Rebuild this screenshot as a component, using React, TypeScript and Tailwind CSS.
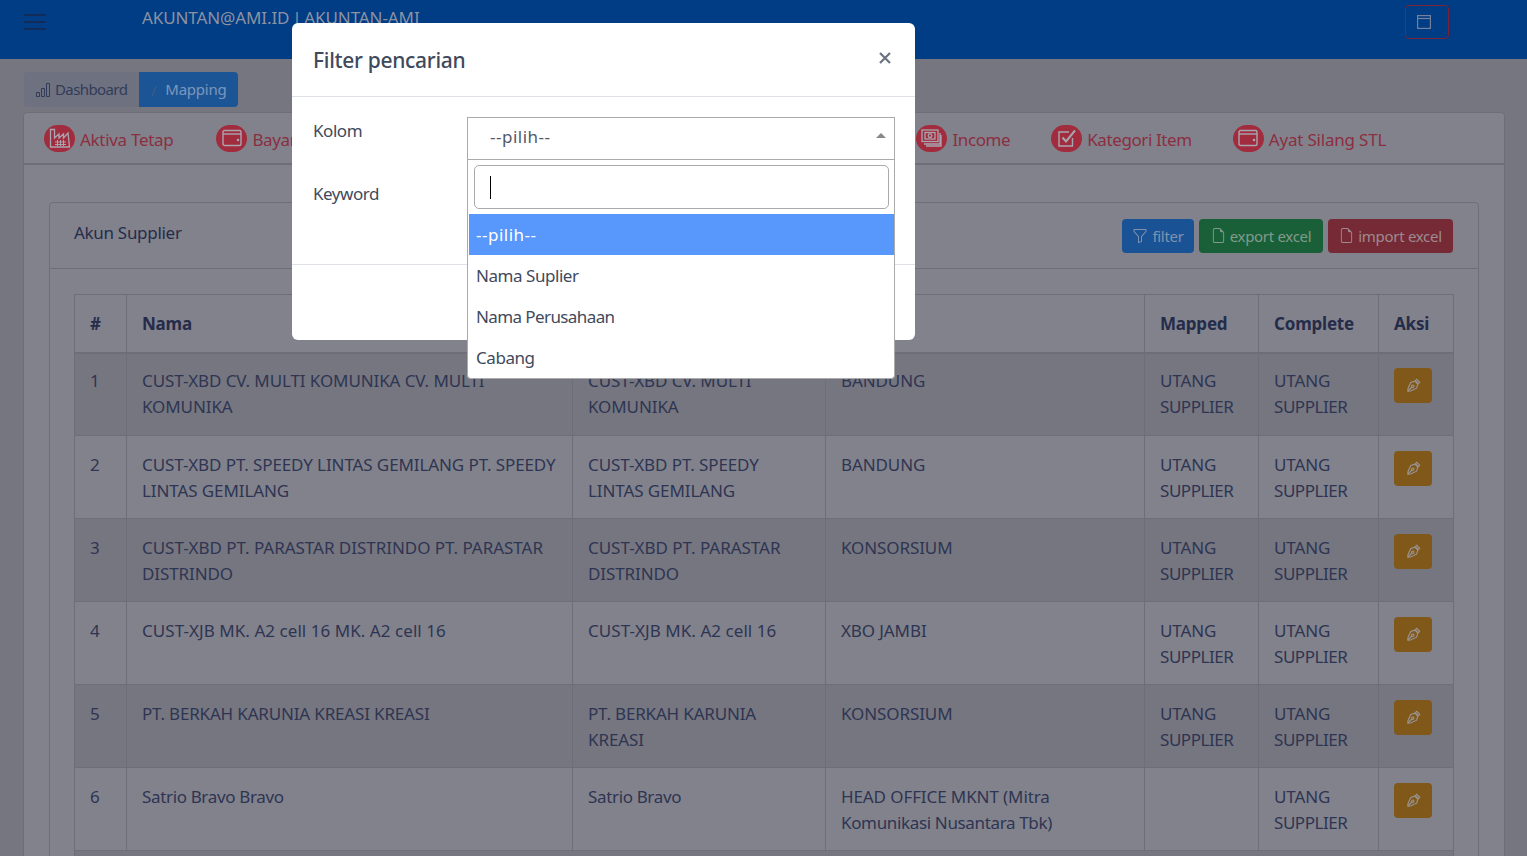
import React from "react";
import { BsBarChart, BsFunnel, BsFileEarmark } from "react-icons/bs";

const font = { fontFamily: '"Noto Sans", "Open Sans", sans-serif' };

function Circle({ children }: { children: React.ReactNode }) {
  return (
    <span className="flex h-[27px] w-[31px] shrink-0 items-center justify-center rounded-full bg-[#a12c3d] text-[#a9a5b0]">
      {children}
    </span>
  );
}

const FactoryIcon = () => (
  <svg width="22" height="20" viewBox="0 0 22 20" fill="none" stroke="currentColor" strokeWidth="1.3">
    <path d="M1.5 19V1.5h4V10l4.5-4v4l4.5-4v4L19 5l1.5 14z" />
    <path d="M6 14h11M6 16.5h11M8.5 12v6M11.5 12v6M14.5 12v6" strokeWidth="1" />
  </svg>
);
const WalletIcon = () => (
  <svg width="20" height="18" viewBox="0 0 20 18" fill="none" stroke="currentColor" strokeWidth="1.4">
    <rect x="1" y="1.5" width="18" height="15" rx="1.5" />
    <path d="M1 5h18" />
    <circle cx="16" cy="11" r="0.6" fill="currentColor" />
  </svg>
);
const CashIcon = () => (
  <svg width="21" height="18" viewBox="0 0 21 18" fill="none" stroke="currentColor" strokeWidth="1.3">
    <rect x="1" y="1" width="16" height="11.5" />
    <rect x="4" y="3.5" width="10" height="6.5" />
    <circle cx="9" cy="6.7" r="1.8" />
    <path d="M3 15h16V4M5 17h15V6" />
  </svg>
);
const CheckIcon = () => (
  <svg width="20" height="20" viewBox="0 0 20 20" fill="none" stroke="currentColor" strokeWidth="1.4">
    <path d="M15.5 10v8H2V4h10" />
    <path d="M5.5 9.5l3.5 4L18 2.5" strokeWidth="2" />
  </svg>
);
const NibIcon = () => (
  <svg width="15" height="15" viewBox="0 0 15 15" fill="none" stroke="#9a9494" strokeWidth="1.1">
    <path d="M8.8 3.2l3 3-1.2 4L4.5 13 1.8 13.2 2 10.5 4.8 4.4z" />
    <circle cx="6.8" cy="8.2" r="1.2" />
    <path d="M2 13l3.9-4" />
    <path d="M9.4 2.6l1.3-1.3 3 3-1.3 1.3z" />
  </svg>
);

const tabs = [
  { label: "Aktiva Tetap", icon: <FactoryIcon />, c: "tracking-[-0.3px]" },
  { label: "Bayar", icon: <WalletIcon />, c: "w-[657px]" },
  { label: "Income", icon: <CashIcon />, c: "" },
  { label: "Kategori Item", icon: <CheckIcon />, c: "-ml-[2px]" },
  { label: "Ayat Silang STL", icon: <WalletIcon />, c: "-ml-[2px] tracking-[-0.2px]" },
];

type Row = { no: number; nama: string[]; perusahaan: string[]; cabang: string[]; mapped: string[]; complete: string[] };
const US = ["UTANG", "SUPPLIER"];
const rows: Row[] = [
  { no: 1, nama: ["CUST-XBD CV. MULTI KOMUNIKA CV. MULTI", "KOMUNIKA"], perusahaan: ["CUST-XBD CV. MULTI", "KOMUNIKA"], cabang: ["BANDUNG"], mapped: US, complete: US },
  { no: 2, nama: ["CUST-XBD PT. SPEEDY LINTAS GEMILANG PT. SPEEDY", "LINTAS GEMILANG"], perusahaan: ["CUST-XBD PT. SPEEDY", "LINTAS GEMILANG"], cabang: ["BANDUNG"], mapped: US, complete: US },
  { no: 3, nama: ["CUST-XBD PT. PARASTAR DISTRINDO PT. PARASTAR", "DISTRINDO"], perusahaan: ["CUST-XBD PT. PARASTAR", "DISTRINDO"], cabang: ["KONSORSIUM"], mapped: US, complete: US },
  { no: 4, nama: ["CUST-XJB MK. A2 cell 16 MK. A2 cell 16"], perusahaan: ["CUST-XJB MK. A2 cell 16"], cabang: ["XBO JAMBI"], mapped: US, complete: US },
  { no: 5, nama: ["PT. BERKAH KARUNIA KREASI KREASI"], perusahaan: ["PT. BERKAH KARUNIA", "KREASI"], cabang: ["KONSORSIUM"], mapped: US, complete: US },
  { no: 6, nama: ["Satrio Bravo Bravo"], perusahaan: ["Satrio Bravo"], cabang: ["HEAD OFFICE MKNT (Mitra", "Komunikasi Nusantara Tbk)"], mapped: [], complete: US },
];

function trackingFor(t: string) {
  if (t === "SUPPLIER") return "tracking-[-0.45px]";
  if (t.includes("cell")) return "tracking-[0.05px]";
  if (t.includes("PARASTAR")) return "tracking-[-0.03px]";
  if (t.includes("BERKAH")) return "tracking-[-0.17px]";
  if (t === t.toUpperCase() || t.startsWith("HEAD")) return "tracking-[-0.1px]";
  return "tracking-[-0.35px]";
}

function Lines({ l }: { l: string[] }) {
  return (
    <>
      {l.map((t) => (
        <div key={t} className={`whitespace-nowrap ${trackingFor(t)}`}>{t}</div>
      ))}
    </>
  );
}

const th = "border border-[#6e6e7b] border-b-2 pl-[15px] pr-4 pt-[1px] text-left align-middle font-bold tracking-[-0.2px] text-[#252c4a]";
const td = "border border-[#6e6e7b] pl-[15px] pr-4 align-top";

export default function App() {
  return (
    <div className="relative h-[856px] w-full overflow-hidden bg-[#767680] text-[17px] leading-[26px] tracking-[-0.45px] text-[#2e3552]" style={font}>
      <header className="flex h-[59px] items-start bg-[#003d84]">
        <div className="ml-6 mt-[14px] flex w-[22px] flex-col gap-[5px]">
          <span className="h-[2px] bg-[#122c5a]" />
          <span className="h-[2px] bg-[#122c5a]" />
          <span className="h-[2px] bg-[#122c5a]" />
        </div>
        <div className="ml-[96px] mt-[5px] tracking-[-0.1px] text-[#8d92a3] [word-spacing:-1.5px]">AKUNTAN@AMI.ID | AKUNTAN-AMI</div>
        <div className="ml-auto mr-[78px] mt-[5px] flex h-[34px] w-[44px] items-center justify-center rounded border border-[#7b2337] pr-[6px]">
          <svg width="14" height="14" viewBox="0 0 14 14" fill="none" stroke="#74809c" strokeWidth="1.2">
            <rect x="0.6" y="0.6" width="12.8" height="12.8" />
            <path d="M0.6 3.5h12.8" />
          </svg>
        </div>
      </header>

      <nav className="ml-6 mt-[13px] flex h-[35px] w-[214px] overflow-hidden rounded text-[15px] tracking-[-0.25px]">
        <div className="flex w-[115px] items-center gap-[4px] bg-[#6e7180] pl-[11px] text-[#333c58]">
          <BsBarChart className="text-[16px]" />
          <span className="mb-[1px] tracking-[-0.6px]">Dashboard</span>
        </div>
        <div className="flex flex-1 items-center bg-[#1c5595] pl-[12px] text-[#7d97bc]">
          <span className="mr-[9px] text-[#3e5d85]">/</span>
          <span className="mb-[1px]">Mapping</span>
        </div>
      </nav>

      <section className="ml-[23px] mr-[22px] mt-[5px] h-[800px] rounded-t border border-[#6e6e7b] bg-[#82828c]">
        <div className="flex h-[52px] items-center gap-[43px] border-b-2 border-[#6e6e7b] pl-[20px] tracking-[-0.4px]">
          {tabs.map((t) => (
            <div key={t.label} className={`flex items-center gap-[5px] whitespace-nowrap text-[#8c2e41] ${t.c}`}>
              <Circle>{t.icon}</Circle>
              <span className="mt-[4px]">{t.label}</span>
            </div>
          ))}
        </div>

        <div className="ml-[25px] mr-[25px] mt-[37px] rounded-t border border-[#6e6e7b]">
          <div className="flex h-[66px] items-center justify-between border-b border-[#6e6e7b] pl-[24px] pr-[25px]">
            <span className="mb-[5px] tracking-[-0.3px] text-[#252c4a]">Akun Supplier</span>
            <div className="flex gap-[5px] text-[15px] tracking-[-0.3px]">
              <button className="flex h-[34px] w-[72px] items-center justify-center gap-[4px] rounded bg-[#1a5296] text-[#7f92ad]">
                <BsFunnel className="text-[16px]" />filter
              </button>
              <button className="flex h-[34px] w-[124px] items-center justify-center gap-[4px] rounded bg-[#196038] text-[#829a8c]">
                <BsFileEarmark className="text-[15px]" />export excel
              </button>
              <button className="flex h-[34px] w-[125px] items-center justify-center gap-[4px] rounded bg-[#752a35] text-[#9f8a91]">
                <BsFileEarmark className="text-[15px]" />import excel
              </button>
            </div>
          </div>
          <div className="pl-[24px] pr-[25px] pt-[25px]">
            <table className="w-[1379px] table-fixed border-collapse">
              <colgroup>
                <col className="w-[52px]" />
                <col className="w-[446px]" />
                <col className="w-[253px]" />
                <col className="w-[319px]" />
                <col className="w-[114px]" />
                <col className="w-[120px]" />
                <col className="w-[75px]" />
              </colgroup>
              <thead>
                <tr className="h-[58px]">
                  <th className={th}>#</th>
                  <th className={th}>Nama</th>
                  <th className={th}></th>
                  <th className={th}></th>
                  <th className={th}>Mapped</th>
                  <th className={th}>Complete</th>
                  <th className={th}>Aksi</th>
                </tr>
              </thead>
              <tbody>
                {rows.map((r) => {
                  const pad = r.no === 1 ? "pt-[14px]" : "pt-[16px]";
                  return (
                    <tr key={r.no} className={`h-[83px] ${r.no % 2 ? "bg-[#767680]" : ""}`}>
                      <td className={`${td} ${pad}`}>{r.no}</td>
                      <td className={`${td} ${pad}`}><Lines l={r.nama} /></td>
                      <td className={`${td} ${pad}`}><Lines l={r.perusahaan} /></td>
                      <td className={`${td} ${pad}`}><Lines l={r.cabang} /></td>
                      <td className={`${td} ${pad}`}><Lines l={r.mapped} /></td>
                      <td className={`${td} ${pad}`}><Lines l={r.complete} /></td>
                      <td className={`${td} ${pad}`}>
                        <div className={`flex h-[35px] w-[38px] items-center justify-center rounded bg-[#80591a] ${r.no === 1 ? "" : "-mt-[1px]"}`}>
                          <NibIcon />
                        </div>
                      </td>
                    </tr>
                  );
                })}
                <tr className="h-[83px] bg-[#767680]"><td className={td} colSpan={7}></td></tr>
              </tbody>
            </table>
          </div>
        </div>
      </section>

      {/* modal */}
      <div className="absolute left-[292px] top-[23px] h-[317px] w-[623px] rounded-md bg-white text-[#3f4a5c]">
        <div className="flex h-[74px] items-center justify-between border-b border-[#dee2e6] pl-[21px] pr-[22px]">
          <h5 className="text-[21px] font-medium tracking-[-0.3px]">Filter pencarian</h5>
          <svg width="12" height="12" viewBox="0 0 12 12" stroke="#6b7280" strokeWidth="2.2" className="mb-[3px] mr-[2px]">
            <path d="M1 1l10 10M11 1L1 11" />
          </svg>
        </div>
        <div className="h-[168px] border-b border-[#dee2e6] pl-[21px] pt-[21px]">
          <div>Kolom</div>
          <div className="mt-[37px]">Keyword</div>
        </div>
      </div>

      <div className="absolute left-[467px] top-[117px] w-[428px] text-[#3f4a5c]">
        <div className="flex h-[43px] items-center justify-between border border-[#aaaaaa] bg-white pl-[22px] pr-[8px] text-[#51596b]">
          <span className="mb-[4px] tracking-[0.5px]">--pilih--</span>
          <span className="mb-[6px] h-0 w-0 border-x-[5px] border-b-[5px] border-x-transparent border-b-[#888888]" />
        </div>
        <div className="h-[219px] rounded-b border border-t-0 border-[#aaaaaa] bg-white pl-[1px]">
          <div className="py-[5px] pl-[5px] pr-[5px]">
            <div className="flex h-[44px] items-start rounded-[5px] border border-[#aaaaaa] pl-[15px] pt-[10px]">
              <span className="h-[23px] w-[1px] bg-black" />
            </div>
          </div>
          <div className="flex h-[41px] items-center bg-[#5897fb] pl-[7px] tracking-[0.5px] text-white">--pilih--</div>
          <div className="flex h-[41px] items-center pl-[7px]">Nama Suplier</div>
          <div className="flex h-[41px] items-center pl-[7px] tracking-[-0.6px]">Nama Perusahaan</div>
          <div className="flex h-[41px] items-center pl-[7px]">Cabang</div>
        </div>
      </div>
    </div>
  );
}
